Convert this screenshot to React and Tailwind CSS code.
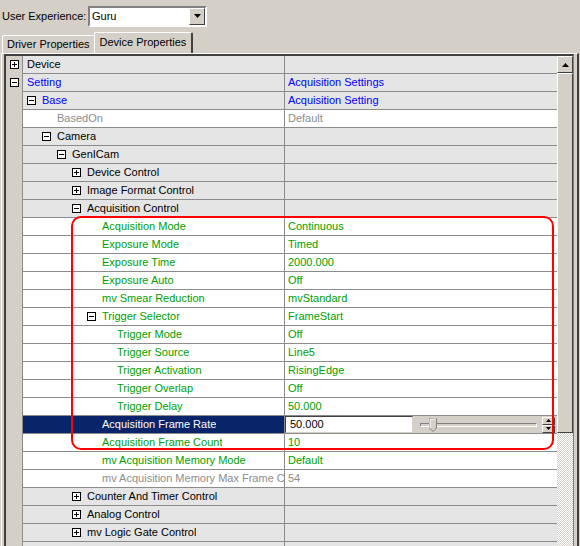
import React from "react"

const PAD = {
    4: "pl-[4px]",
    19: "pl-[19px]",
    34: "pl-[34px]",
    49: "pl-[49px]",
    64: "pl-[64px]",
    79: "pl-[79px]",
    94: "pl-[94px]",
}

const COLOR = {
    black: "text-black",
    blue: "text-[#0000ff]",
    gray: "text-[#8c8c8c]",
    green: "text-[#00a000]",
}

// kind: "cat" = grey category row, "prop" = white property row
const ROWS = [
    { label: "Device", level: 0, icon: "+", kind: "cat" },
    { label: "Setting", level: 0, icon: "-", kind: "cat", color: "blue", value: "Acquisition Settings", vcolor: "blue" },
    { label: "Base", level: 1, icon: "-", kind: "cat", color: "blue", value: "Acquisition Setting", vcolor: "blue" },
    { label: "BasedOn", level: 2, kind: "prop", color: "gray", value: "Default", vcolor: "gray" },
    { label: "Camera", level: 2, icon: "-", kind: "cat" },
    { label: "GenICam", level: 3, icon: "-", kind: "cat" },
    { label: "Device Control", level: 4, icon: "+", kind: "cat" },
    { label: "Image Format Control", level: 4, icon: "+", kind: "cat" },
    { label: "Acquisition Control", level: 4, icon: "-", kind: "cat" },
    { label: "Acquisition Mode", level: 5, kind: "prop", color: "green", value: "Continuous" },
    { label: "Exposure Mode", level: 5, kind: "prop", color: "green", value: "Timed" },
    { label: "Exposure Time", level: 5, kind: "prop", color: "green", value: "2000.000" },
    { label: "Exposure Auto", level: 5, kind: "prop", color: "green", value: "Off" },
    { label: "mv Smear Reduction", level: 5, kind: "prop", color: "green", value: "mvStandard" },
    { label: "Trigger Selector", level: 5, icon: "-", kind: "prop", color: "green", value: "FrameStart" },
    { label: "Trigger Mode", level: 6, kind: "prop", color: "green", value: "Off" },
    { label: "Trigger Source", level: 6, kind: "prop", color: "green", value: "Line5" },
    { label: "Trigger Activation", level: 6, kind: "prop", color: "green", value: "RisingEdge" },
    { label: "Trigger Overlap", level: 6, kind: "prop", color: "green", value: "Off" },
    { label: "Trigger Delay", level: 6, kind: "prop", color: "green", value: "50.000" },
    { label: "Acquisition Frame Rate", level: 5, kind: "selected", value: "50.000" },
    { label: "Acquisition Frame Count", level: 5, kind: "prop", color: "green", value: "10" },
    { label: "mv Acquisition Memory Mode", level: 5, kind: "prop", color: "green", value: "Default" },
    { label: "mv Acquisition Memory Max Frame Count", level: 5, kind: "prop", color: "gray", value: "54", vcolor: "gray" },
    { label: "Counter And Timer Control", level: 4, icon: "+", kind: "cat" },
    { label: "Analog Control", level: 4, icon: "+", kind: "cat" },
    { label: "mv Logic Gate Control", level: 4, icon: "+", kind: "cat" },
    { label: "mv Serial Interface Control", level: 4, icon: "+", kind: "cat" },
]

const Box = ({ sign }) => (
    <span className="relative w-[9px] h-[9px] shrink-0 border border-black bg-white">
        <span className="absolute left-[1px] top-[3px] w-[5px] h-[1px] bg-black" />
        {sign === "+" && <span className="absolute left-[3px] top-[1px] w-[1px] h-[5px] bg-black" />}
    </span>
)

const Arrow = ({ up, small }) => (
    <svg width={small ? 5 : 7} height={small ? 3 : 4} viewBox={small ? "0 0 5 3" : "0 0 7 4"}>
        {up ? (
            <polygon points={small ? "2.5,0 5,3 0,3" : "3.5,0 7,4 0,4"} fill="#000" />
        ) : (
            <polygon points={small ? "0,0 5,0 2.5,3" : "0,0 7,0 3.5,4"} fill="#000" />
        )}
    </svg>
)

const Raised = ({ className, children }) => (
    <div className={`bg-[#d4d0c8] border border-t-white border-l-white border-r-[#404040] border-b-[#404040] flex items-center justify-center ${className}`}>
        {children}
    </div>
)

const Editor = ({ value }) => (
    <div className="flex h-full w-full items-stretch">
        <div className="w-[128px] bg-white border border-t-[#404040] border-l-[#404040] border-r-[#d4d0c8] border-b-[#d4d0c8] flex items-center pl-[4px] text-black">
            {value}
        </div>
        <div className="flex-1 bg-[#d4d0c8] flex items-center pl-[7px] pr-[2px]">
            <div className="relative flex-1 h-[4px] border border-t-[#808080] border-l-[#808080] border-r-white border-b-white bg-[#d4d0c8] mr-[5px]">
                <svg className="absolute left-[8px] top-[-6px]" width="8" height="14" viewBox="0 0 8 14">
                    <path d="M0.5 0.5 H7.5 V10 L4 13.5 L0.5 10 Z" fill="#d4d0c8" stroke="#808080" />
                    <path d="M1 1 H7 M1 1 V10" stroke="#fff" />
                </svg>
            </div>
            <div className="flex flex-col w-[13px] h-[16px]">
                <Raised className="h-[8px]"><Arrow up small /></Raised>
                <Raised className="h-[8px]"><Arrow small /></Raised>
            </div>
        </div>
    </div>
)

const Row = ({ row }) => {
    const bg = row.kind === "cat" ? "bg-[#e5e5e5]" : "bg-white"
    const showIconInCell = row.icon && row.level > 0
    const pad = PAD[4 + 15 * row.level - (showIconInCell ? 15 : 0)]
    const selected = row.kind === "selected"
    return (
        <div className="flex h-[18px] shrink-0">
            <div className="w-[16px] shrink-0 bg-[#d4d0c8] flex items-center pl-[4px] border-b border-[#d4d0c8]">
                {row.icon && row.level === 0 && <Box sign={row.icon} />}
            </div>
            <div
                className={`w-[262px] shrink-0 flex items-center overflow-hidden whitespace-nowrap border-l border-b border-[#8c8c8c] ${pad} ${
                    selected ? "bg-[#0a246a] text-white" : `${bg} ${COLOR[row.color || "black"]}`
                }`}
            >
                {showIconInCell && (
                    <span className="mr-[6px] flex">
                        <Box sign={row.icon} />
                    </span>
                )}
                <span className="overflow-hidden">{row.label}</span>
            </div>
            <div
                className={`flex-1 flex items-center overflow-hidden whitespace-nowrap border-l border-b border-[#8c8c8c] ${
                    selected ? "bg-white" : `${bg} pl-[3px] ${COLOR[row.vcolor || "green"]}`
                }`}
            >
                {selected ? <Editor value={row.value} /> : row.value}
            </div>
        </div>
    )
}

export default function App() {
    return (
        <div className="relative w-[580px] h-[546px] overflow-hidden bg-[#d4d0c8] text-[11px] text-black font-['Tahoma','Liberation_Sans',sans-serif]">
            {/* user experience selector */}
            <div className="flex items-center h-[31px] pl-[2px] pt-[1px]">
                <span className="w-[86px]">User Experience:</span>
                <div className="flex items-center w-[119px] h-[21px] bg-white border-2 border-t-[#808080] border-l-[#808080] border-r-white border-b-white">
                    <span className="flex-1 pl-[2px]">Guru</span>
                    <Raised className="w-[16px] h-[17px]"><Arrow /></Raised>
                </div>
            </div>

            {/* tabs */}
            <div className="flex items-end h-[22px] pl-[2px]">
                <div className="h-[18px] px-[4px] flex items-center border-t border-l border-white border-r border-r-[#808080] rounded-t-[2px]">
                    Driver Properties
                </div>
                <div className="h-[21px] px-[5px] -ml-[1px] flex items-center pb-[2px] border-t border-l border-white border-r-2 border-r-[#404040] rounded-t-[2px] bg-[#d4d0c8]">
                    Device Properties
                </div>
            </div>

            {/* property grid */}
            <div className="ml-[1px] w-[578px] h-[600px] border-t border-l border-white border-r-2 border-r-[#404040] pl-[2px] pr-[3px]">
                <div className="flex h-full border-t-2 border-l-2 border-[#404040] border-r border-r-[#808080]">
                    <div className="flex flex-col w-[552px]">
                        {ROWS.map((row) => (
                            <Row key={row.label} row={row} />
                        ))}
                    </div>
                    <div className="flex flex-col w-[16px]">
                        <Raised className="h-[17px] w-[16px]"><Arrow up /></Raised>
                        <div className="h-[360px] w-[16px] bg-[#d4d0c8] border border-t-white border-l-white border-r-[#404040] border-b-[#404040]" />
                        <div className="flex-1 bg-[repeating-conic-gradient(#d4d0c8_0_25%,#ffffff_0_50%)] bg-[length:2px_2px]" />
                    </div>
                </div>
            </div>

            {/* highlight frame */}
            <div className="absolute left-[71px] top-[216px] w-[483px] h-[234px] border-2 border-[#ff0000] rounded-[10px] pointer-events-none" />
        </div>
    )
}
